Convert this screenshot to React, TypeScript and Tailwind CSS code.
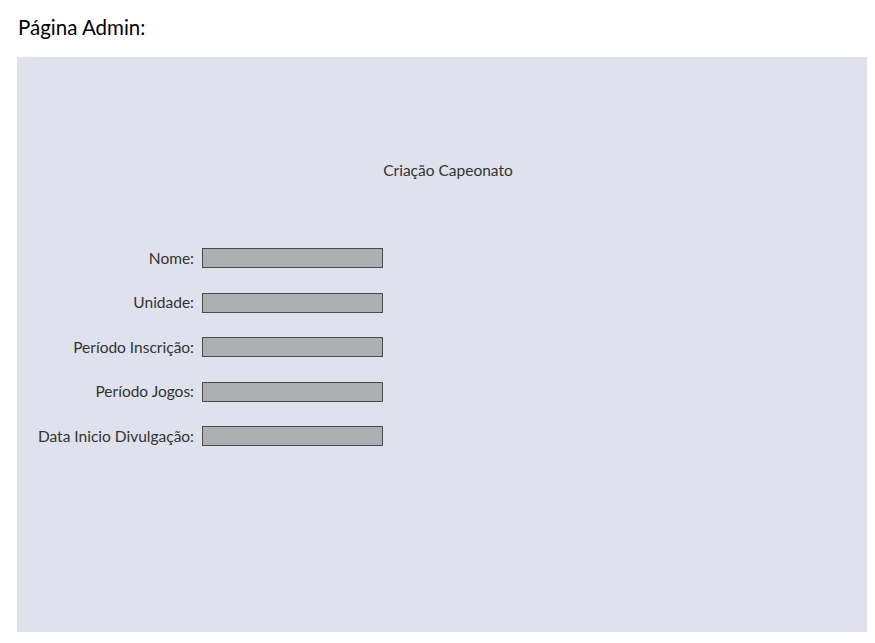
import React from 'react';

const fields = ['Nome:', 'Unidade:', 'Período Inscrição:', 'Período Jogos:', 'Data Inicio Divulgação:'];

const App: React.FC = () => {
  return (
    <div className="min-h-screen bg-white pl-[17px] font-['Lato','Open_Sans',sans-serif] text-[#1a1a1a]">
      {/* Header */}
      <div className="h-[57px] flex items-center pl-[1px] pb-[2px]">
        <h1 className="text-[20.5px] text-black">Página Admin:</h1>
      </div>

      {/* Admin panel */}
      <div className="w-[850px] h-[575px] bg-[#dfe1ec]">
        <div className="pt-[102px] text-center text-[15.5px] text-[#333] pl-[12px]">Criação Capeonato</div>

        <div className="mt-[66px] flex flex-col gap-[24.5px]">
          {fields.map((label) => (
            <div key={label} className="flex items-center h-[20px]">
              <span className="w-[177px] text-right text-[15.5px] text-[#333] leading-none">{label}</span>
              <div className="ml-[8px] w-[181px] h-[20px] bg-[#aeafb3] border-[1.5px] border-[#4a4a4a]" />
            </div>
          ))}
        </div>
      </div>
    </div>
  );
};

export default App;
